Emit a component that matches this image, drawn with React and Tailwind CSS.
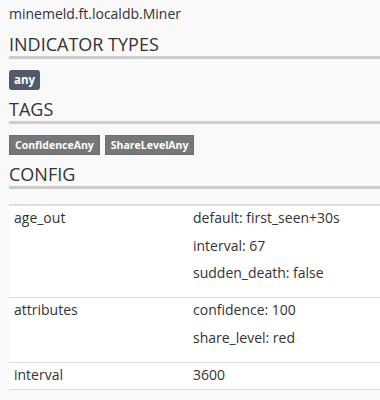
import React from 'react';

const config = [
  { key: 'age_out', values: ['default: first_seen+30s', 'interval: 67', 'sudden_death: false'] },
  { key: 'attributes', values: ['confidence: 100', 'share_level: red'] },
  { key: 'interval', values: ['3600'] },
];

const SectionHeading = ({ children, className = '' }) => (
  <h2 className={`text-[18px] leading-[24px] font-normal text-[#333] border-b-[3px] border-[#cccccc] ${className}`}>
    {children}
  </h2>
);

export default function App() {
  return (
    <div
      className="min-h-[400px] bg-[#f9f9f9] pl-[9px] text-[#333]"
      style={{ fontFamily: '"Open Sans", "Liberation Sans", sans-serif' }}
    >
      <div className="pt-[4px] text-[14px] leading-[20px]">minemeld.ft.localdb.Miner</div>

      <SectionHeading className="mt-[8px]">INDICATOR TYPES</SectionHeading>
      <div className="mt-[11px] flex">
        <span className="h-[20px] px-[5px] rounded-[3px] bg-[#515a6b] text-white text-[11.5px] font-bold leading-[20px]">
          any
        </span>
      </div>

      <SectionHeading className="mt-[7px]">TAGS</SectionHeading>
      <div className="mt-[11px] flex gap-[5px]">
        {['ConfidenceAny', 'ShareLevelAny'].map((t) => (
          <span
            key={t}
            className="h-[20px] px-[5px] bg-[#777777] border border-[#6e6e6e] text-white text-[10.5px] font-bold leading-[18px]"
          >
            {t}
          </span>
        ))}
      </div>

      <SectionHeading className="mt-[7px]">CONFIG</SectionHeading>

      <div className="mt-[15px] bg-white border-t-2 border-[#dddddd] text-[14px] leading-[20px]">
        {config.map((row) => (
          <div key={row.key} className="grid grid-cols-[179px_1fr] border-b border-[#dddddd]">
            <div className="px-[5px] pt-[2px] pb-[4px]">{row.key}</div>
            <div className="px-[5px] pt-[2px] pb-[4px]">
              {row.values.length > 1 ? (
                <div className="flex flex-col gap-[7.5px] pb-[10px]">
                  {row.values.map((v) => (
                    <div key={v}>{v}</div>
                  ))}
                </div>
              ) : (
                <div>{row.values[0]}</div>
              )}
            </div>
          </div>
        ))}
      </div>
    </div>
  );
}
